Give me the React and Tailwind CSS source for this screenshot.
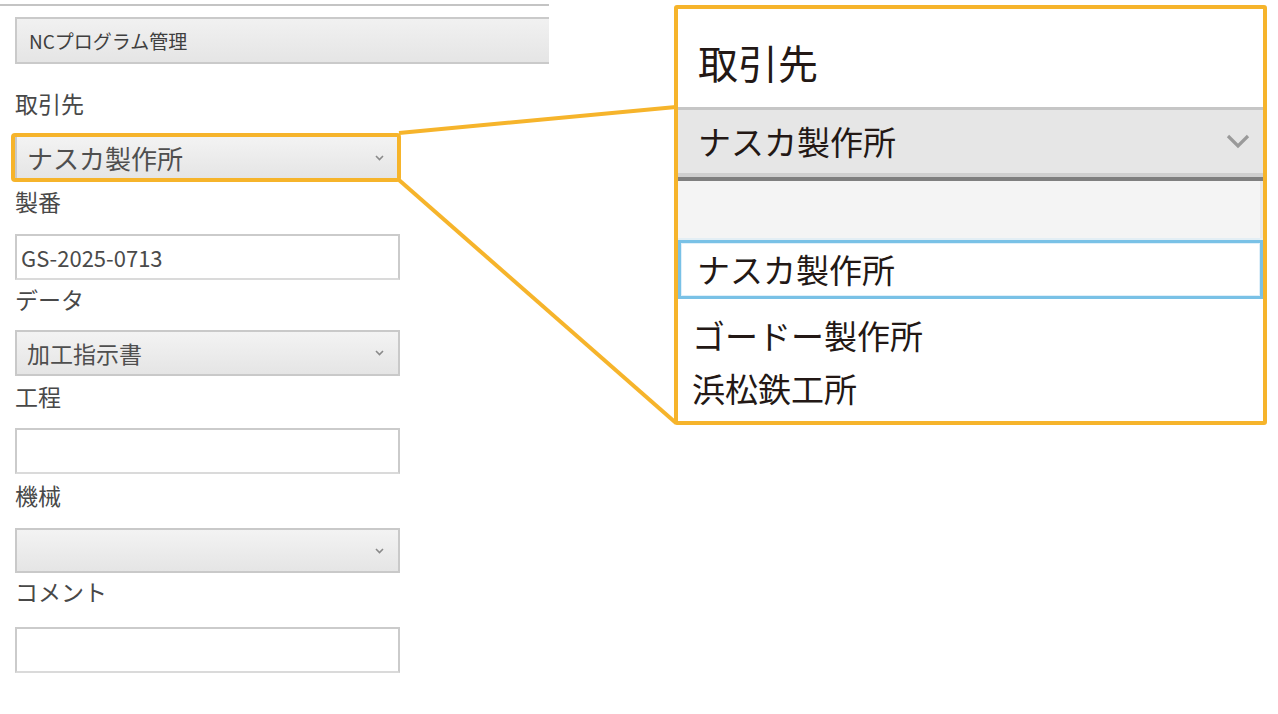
import React from "react";

const FONT = { fontFamily: '"Noto Sans CJK JP", "Noto Sans", sans-serif' };

function SmallChevron() {
  return (
    <svg width="9" height="6" viewBox="0 0 9 6" className="shrink-0">
      <polyline points="1,1 4.5,4.5 8,1" fill="none" stroke="#8a8a8a" strokeWidth="1.6" />
    </svg>
  );
}

function LeftSelect({ value, className = "", textClass = "text-[23px]" }) {
  return (
    <div
      className={`ml-[15px] w-[385px] flex items-center justify-between pl-[10px] pr-[14px] border-2 border-[#c9c9c9] bg-gradient-to-b from-[#f3f3f3] to-[#e5e5e5] ${className}`}
    >
      <span className={`${textClass} leading-none text-[#4f4f4f] whitespace-nowrap`}>{value}</span>
      <SmallChevron />
    </div>
  );
}

function LeftInput({ value = "", className = "" }) {
  return (
    <div
      className={`ml-[15px] w-[385px] flex items-center pl-[4px] border-2 border-[#cbcbcb] border-b-[#dadada] bg-white ${className}`}
    >
      <span className="text-[22px] leading-none text-[#4a4a4a] whitespace-nowrap">{value}</span>
    </div>
  );
}

function Label({ children, className = "" }) {
  return (
    <div className={`ml-[15px] h-[24px] leading-[24px] text-[23px] text-[#484848] whitespace-nowrap ${className}`}>
      {children}
    </div>
  );
}

export default function App() {
  return (
    <div className="relative w-[1278px] h-[714px] bg-white overflow-hidden" style={FONT}>
      <div className="flex">
        {/* left form */}
        <div className="w-[549px] flex flex-col shrink-0">
          <div className="h-[2px] mt-[4px] bg-[#c4c4c4] w-[549px]" />
          <div className="mt-[11px] ml-[15px] w-[534px] h-[47px] flex items-center pl-[12px] border-2 border-r-0 border-[#cacaca] bg-gradient-to-b from-[#f1f1f1] to-[#e5e5e5]">
            <span className="text-[19px] leading-none text-[#3f3f3f] whitespace-nowrap">NCプログラム管理</span>
          </div>

          <Label className="mt-[27px]">取引先</Label>
          <LeftSelect value="ナスカ製作所" className="mt-[20px] h-[45px]" textClass="text-[26px]" />

          <Label className="mt-[9px]">製番</Label>
          <LeftInput value="GS-2025-0713" className="mt-[21px] h-[46px]" />

          <Label className="mt-[7px]">データ</Label>
          <LeftSelect value="加工指示書" className="mt-[19px] h-[46px]" />

          <Label className="mt-[8px]">工程</Label>
          <LeftInput className="mt-[20px] h-[46px]" />

          <Label className="mt-[9px]">機械</Label>
          <LeftSelect value="" className="mt-[21px] h-[45px]" />

          <Label className="mt-[6px]">コメント</Label>
          <LeftInput className="mt-[24px] h-[46px]" />
        </div>

        {/* magnified callout */}
        <div className="ml-[125px] mt-[5px] w-[593px] h-[420px] border-4 border-[#f6b42b] rounded-[3px] bg-white flex flex-col text-[#231815] shrink-0">
          <div className="h-[98px] pl-[20px] pt-[31px]">
            <div className="text-[40px] leading-[44px] whitespace-nowrap">取引先</div>
          </div>
          <div className="h-[74px] flex flex-col">
            <div className="h-[3px] bg-[#c6c6c6]" />
            <div className="h-[63px] bg-[#e6e6e6] flex items-center justify-between pl-[20px] pr-[13px]">
              <span className="text-[33px] leading-none whitespace-nowrap">ナスカ製作所</span>
              <svg width="24" height="15" viewBox="0 0 24 15">
                <polyline points="2,2 12,12 22,2" fill="none" stroke="#9a9a9a" strokeWidth="3.2" />
              </svg>
            </div>
            <div className="h-[4px] bg-[#cfcfcf]" />
            <div className="h-[4px] bg-[#7f7f7f]" />
          </div>
          <div className="h-[57px] bg-[#f4f4f4] border-r-[3px] border-[#e9e9e9]" />
          <div className="h-[2px] bg-[#e3eef4]" />
          <div className="h-[59px] border-[3px] border-[#79c1e6] bg-white flex">
            <div className="flex-1 flex items-center pl-[15px] border border-[#dff0fa]">
              <span className="text-[33px] leading-none whitespace-nowrap">ナスカ製作所</span>
            </div>
          </div>
          <div className="mt-[10px] h-[53px] flex items-center pl-[14px]">
            <span className="text-[33px] leading-none whitespace-nowrap">ゴードー製作所</span>
          </div>
          <div className="h-[53px] flex items-center pl-[14px]">
            <span className="text-[33px] leading-none whitespace-nowrap">浜松鉄工所</span>
          </div>
        </div>
      </div>

      {/* annotation overlay */}
      <svg className="absolute top-0 left-0 pointer-events-none" width="1278" height="714" viewBox="0 0 1278 714">
        <rect x="13" y="135" width="386" height="45" rx="2" fill="none" stroke="#f6b42b" strokeWidth="4" />
        <line x1="399" y1="133" x2="676" y2="107" stroke="#f6b42b" strokeWidth="4" />
        <line x1="399" y1="180" x2="676" y2="423" stroke="#f6b42b" strokeWidth="4" />
      </svg>
    </div>
  );
}
